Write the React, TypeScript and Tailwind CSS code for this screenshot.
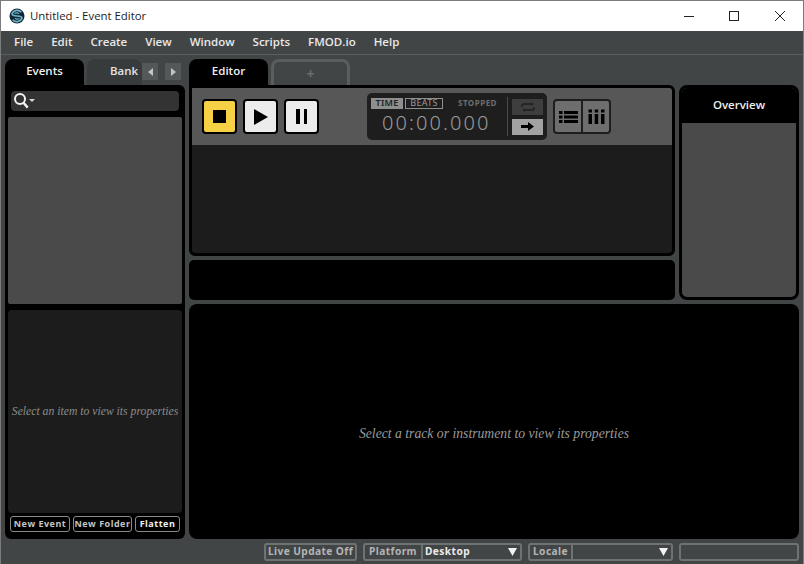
import React from "react";

const menus = ["File", "Edit", "Create", "View", "Window", "Scripts", "FMOD.io", "Help"];

const Logo = () => (
	<svg width="16" height="16" viewBox="0 0 16 16">
		<circle cx="8" cy="8" r="7.500" fill="#0f2733" />
		<path d="M12.300 4.200A5.600 5.600 0 0 0 3 5.600c0 2.200 2.400 2.400 5 2.400s5 .3 5 2.400a5.600 5.600 0 0 1-9.300 1.400" fill="none" stroke="#6fb4c8" strokeWidth="1.700" />
		<path d="M5.500 5.500c1.500-.9 3.300-.7 4.500.2M10.500 10.500c-1.500.9-3.300.7-4.500-.2" fill="none" stroke="#6fb4c8" strokeWidth="1.100" />
	</svg>
);

const FooterButton = ({ label, bright }: { label: string; bright?: boolean }) => (
	<div
		className={`flex h-4 items-center justify-center rounded-[3px] border border-[#8a8a8a] text-[9px] font-bold tracking-[0.5px] ${
			bright ? "text-[#f0f0f0]" : "text-[#c4c4c4]"
		}`}
	>
		{label}
	</div>
);

const Transport = ({ children, yellow }: { children: React.ReactNode; yellow?: boolean }) => (
	<div
		className={`flex h-[35px] w-[35px] items-center justify-center rounded-[4px] border-2 border-black ${
			yellow ? "bg-[#f7d145]" : "bg-[#ececec]"
		}`}
	>
		{children}
	</div>
);

const Triangle = () => (
	<svg width="9" height="8" viewBox="0 0 9 8" className="shrink-0">
		<path d="M0 0h9L4.500 8z" fill="#f2f2f2" />
	</svg>
);

export default function App() {
	return (
		<div className="flex h-[564px] w-[804px] flex-col overflow-hidden border-x border-t border-[#7c7c7c] bg-[#424546] font-['Open_Sans',sans-serif]">
			{/* title bar */}
			<div className="flex h-[30px] shrink-0 items-center bg-white pl-[8px] text-black">
				<Logo />
				<span className="ml-[5px] text-[11.400px] text-[#1c1c1c]">Untitled - Event Editor</span>
				<div className="ml-auto flex items-center pr-[17px]">
					<svg width="12" height="12" viewBox="0 0 12 12" className="mr-[33px]">
						<path d="M1 6.500h10" stroke="#222" strokeWidth="1" />
					</svg>
					<svg width="12" height="12" viewBox="0 0 12 12" className="mr-[34px]">
						<rect x="1.500" y="1.500" width="9" height="9" fill="none" stroke="#222" strokeWidth="1" />
					</svg>
					<svg width="12" height="12" viewBox="0 0 12 12">
						<path d="M1 1l10 10M11 1L1 11" stroke="#222" strokeWidth="1" />
					</svg>
				</div>
			</div>

			{/* menu bar */}
			<div className="flex h-[24px] shrink-0 items-center gap-[18px] border-b border-[#5a5d5e] pb-[2px] pl-[13px] text-[11.500px] font-semibold text-[#e8e8e8]">
				{menus.map((m) => (
					<span key={m}>{m}</span>
				))}
			</div>

			{/* main */}
			<div className="flex min-h-0 flex-1 gap-1 pl-1 pr-1 pt-1">
				{/* left column */}
				<div className="flex w-[180px] shrink-0 flex-col">
					<div className="flex h-[26px] shrink-0 items-end">
						<div className="flex h-[26px] w-[79px] items-center justify-center rounded-t-[8px] bg-black pb-[2px] text-[11.500px] font-semibold text-[#efefef]">
							Events
						</div>
						<div className="ml-[3px] flex h-[26px] w-[55px] items-center justify-end overflow-hidden rounded-t-[8px] bg-[#383b3c] pb-[2px] pr-1 text-[11.500px] font-semibold text-[#e4e4e4]">
							<span className="w-[28px] overflow-hidden">Banks</span>
						</div>
						<div className="mb-[5px] flex h-[17px] items-center">
							<div className="flex h-[17px] w-[16px] items-center justify-center bg-[#555858]">
								<svg width="5" height="8" viewBox="0 0 5 8">
									<path d="M5 0v8L0 4z" fill="#c4c4c4" />
								</svg>
							</div>
							<div className="ml-[7px] flex h-[17px] w-[16px] items-center justify-center bg-[#555858]">
								<svg width="5" height="8" viewBox="0 0 5 8">
									<path d="M0 0v8l5-4z" fill="#c4c4c4" />
								</svg>
							</div>
						</div>
					</div>
					<div className="flex min-h-0 flex-1 flex-col rounded-[6px] rounded-tl-none bg-black px-[3px] pb-[7px]">
						<div className="mx-[3px] mt-[6px] flex h-5 shrink-0 items-center rounded-[4px] bg-[#333333] pl-[2px]">
							<svg width="22" height="18" viewBox="0 0 22 18">
								<circle cx="7" cy="7" r="5" fill="none" stroke="#f4f4f4" strokeWidth="2" />
								<path d="M10.500 10.800l4.200 4.800" stroke="#f4f4f4" strokeWidth="2.400" />
								<path d="M16 7h6l-3 3z" fill="#d8d8d8" />
							</svg>
						</div>
						<div className="mt-[6px] h-[187px] shrink-0 rounded-[2px] bg-[#4a4a4a]" />
						<div className="mt-[6px] flex min-h-0 flex-1 items-center justify-center rounded-[4px] bg-[#1c1c1c] font-['Liberation_Serif',serif] text-[11.700px] italic text-[#8c8c8c]">
							Select an item to view its properties
						</div>
						<div className="mt-[3px] flex shrink-0 justify-between px-[2px]">
							<div className="w-[60px]">
								<FooterButton label="New Event" />
							</div>
							<div className="w-[59px]">
								<FooterButton label="New Folder" />
							</div>
							<div className="w-[45px]">
								<FooterButton label="Flatten" bright />
							</div>
						</div>
					</div>
				</div>

				{/* right column */}
				<div className="flex min-w-0 flex-1 flex-col">
					<div className="flex h-[26px] shrink-0 items-end">
						<div className="flex h-[26px] w-[79px] items-center justify-center rounded-t-[8px] bg-black pb-[2px] text-[11.500px] font-semibold text-[#efefef]">
							Editor
						</div>
						<div className="ml-[3px] flex h-[26px] w-[79px] items-center justify-center rounded-t-[8px] border-x-[3px] border-t-[3px] border-[#5b5e5f] text-[14px] font-bold text-[#6a6d6e]">
							+
						</div>
					</div>
					<div className="flex shrink-0 gap-1">
						<div className="flex w-[486px] flex-col gap-1">
							<div className="flex h-[171px] flex-col overflow-hidden rounded-[6px] rounded-tl-none border-[3px] border-black bg-[#1c1c1c]">
								<div className="flex h-[57px] shrink-0 items-center bg-[#575757] pl-[10px]">
									<div className="flex gap-[6px]">
										<Transport yellow>
											<div className="h-[13px] w-[13px] bg-black" />
										</Transport>
										<Transport>
											<svg width="14" height="16" viewBox="0 0 14 16">
												<path d="M0 0l14 8L0 16z" fill="#000" />
											</svg>
										</Transport>
										<Transport>
											<div className="flex gap-[4px]">
												<div className="h-[15px] w-[3.500px] bg-black" />
												<div className="h-[15px] w-[3.500px] bg-black" />
											</div>
										</Transport>
									</div>
									<div className="ml-[48px] flex h-[47px] w-[180px] items-center rounded-[5px] bg-[#1e1e1e] pl-1 pr-1">
										<div className="flex w-[137px] flex-col">
											<div className="flex h-[11px] items-center font-['Noto_Sans',sans-serif] text-[9px] font-semibold tracking-[0.3px]">
												<div className="flex h-[11px] w-[32px] items-center justify-center bg-[#8e8e8e] text-[#222]">TIME</div>
												<div className="ml-[2px] flex h-[11px] w-[38px] items-center justify-center border border-[#8e8e8e] font-normal text-[#9a9a9a]">
													BEATS
												</div>
												<div className="ml-[15px] text-[8px] font-bold tracking-[0.5px] text-[#6e6e6e]">STOPPED</div>
											</div>
											<div className="mt-px pl-[11px] font-['Noto_Sans',sans-serif] text-[20px] font-light leading-[26px] tracking-[2.100px] text-[#9c9c9c]">
												00:00.000
											</div>
										</div>
										<div className="ml-px h-[39px] w-px bg-[#4a4a4a]" />
										<div className="ml-[4px] flex flex-col gap-[4px]">
											<div className="flex h-4 w-[31px] items-center justify-center bg-[#3e3e3e]">
												<svg width="14" height="10" viewBox="0 0 14 10" fill="none" stroke="#242424" strokeWidth="1.800">
													<path d="M1 5V3.500Q1 2 3 2h8M13 5v1.500Q13 8 11 8H3" />
													<path d="M10 0l3 2-3 2zM4 6L1 8l3 2z" fill="#242424" stroke="none" />
												</svg>
											</div>
											<div className="flex h-4 w-[31px] items-center justify-center bg-[#a2a2a2]">
												<svg width="13" height="9" viewBox="0 0 13 9">
													<path d="M0 3h7V0l6 4.500L7 9V6H0z" fill="#000" />
												</svg>
											</div>
										</div>
									</div>
									<div className="ml-[6px] flex h-[35px] w-[58px] overflow-hidden rounded-[4px] border-2 border-[#1e1e1e] bg-[#6e6e6e]">
										<div className="flex w-[28px] items-center justify-center border-r-2 border-[#1e1e1e]">
											<svg width="19" height="14" viewBox="0 0 19 14" fill="#000">
												<rect x="0" y="1" width="3.500" height="3" />
												<rect x="5" y="1" width="14" height="3" />
												<rect x="0" y="5.500" width="3.500" height="3" />
												<rect x="5" y="5.500" width="14" height="3" />
												<rect x="0" y="10" width="3.500" height="3" />
												<rect x="5" y="10" width="14" height="3" />
											</svg>
										</div>
										<div className="flex flex-1 items-center justify-center">
											<svg width="17" height="15" viewBox="0 0 17 15" fill="#000">
												<rect x="0.500" y="0.500" width="3.500" height="3" />
												<rect x="6.700" y="0.500" width="3.500" height="3" />
												<rect x="13" y="0.500" width="3.500" height="3" />
												<rect x="0.500" y="5" width="3.500" height="10" />
												<rect x="6.700" y="5" width="3.500" height="10" />
												<rect x="13" y="5" width="3.500" height="10" />
											</svg>
										</div>
									</div>
								</div>
							</div>
							<div className="h-10 rounded-[5px] bg-black" />
						</div>
						<div className="flex h-[215px] w-[120px] flex-col overflow-hidden rounded-[8px] border-[3px] border-black bg-[#4a4a4a]">
							<div className="flex h-[35px] shrink-0 items-center justify-center bg-black pb-[2px] text-[11.500px] font-semibold text-[#efefef]">
								Overview
							</div>
						</div>
					</div>
					<div className="mt-1 flex min-h-0 flex-1 items-center justify-center rounded-[8px] bg-black pt-[26px] font-['Liberation_Serif',serif] text-[13.700px] italic text-[#9a9a9a]">
						Select a track or instrument to view its properties
					</div>
				</div>
			</div>

			{/* status bar */}
			<div className="flex h-[25px] shrink-0 items-center whitespace-nowrap pl-[263px] pt-[1px] font-['Noto_Sans',sans-serif] text-[10.200px] font-bold tracking-[0.4px] text-[#b4b4b4]">
				<div className="flex h-[18px] w-[93px] items-center justify-center rounded-[3px] border-2 border-[#6f7273]">Live Update Off</div>
				<div className="ml-[6px] flex h-[18px] w-[159px] items-center rounded-[3px] border-2 border-[#6f7273]">
					<div className="flex h-full w-[58px] shrink-0 items-center justify-center border-r-2 border-[#6f7273]">Platform</div>
					<span className="ml-[2px] flex-1 text-[#ececec]">Desktop</span>
					<div className="mr-[3px]">
						<Triangle />
					</div>
				</div>
				<div className="ml-[6px] flex h-[18px] w-[145px] items-center rounded-[3px] border-2 border-[#6f7273]">
					<div className="flex h-full w-[43px] shrink-0 items-center justify-center border-r-2 border-[#6f7273]">Locale</div>
					<span className="flex-1" />
					<div className="mr-[3px]">
						<Triangle />
					</div>
				</div>
				<div className="ml-[6px] h-[18px] w-[120px] rounded-[3px] border-2 border-[#6f7273]" />
			</div>
		</div>
	);
}
